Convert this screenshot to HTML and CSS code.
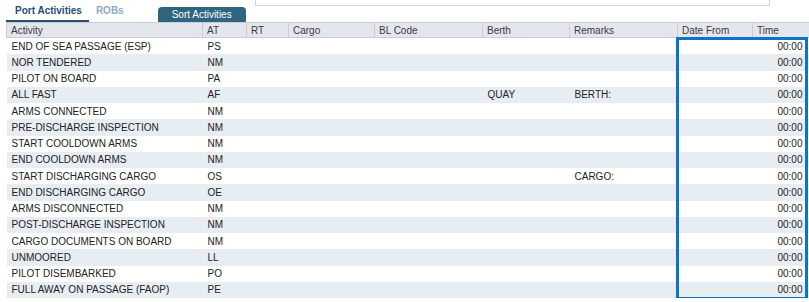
FILE: index.html
```html
<!DOCTYPE html>
<html lang="en">
<head>
  <meta charset="UTF-8">
  <title>Port Activities</title>
  <link rel="stylesheet" href="styles.css">
</head>
<body>

  <!-- Filter box (cut at top) -->
  <div class="filter-box"></div>

  <!-- Tabs and sort button -->
  <div class="tabs">
    <div class="tab active">Port Activities</div>
    <div class="tab">ROBs</div>
    <button class="sort-btn">Sort Activities</button>
  </div>

  <!-- Activities table -->
  <div class="grid-wrap">
    <table class="grid">
      <colgroup>
        <col style="width:196px">
        <col style="width:44px">
        <col style="width:42px">
        <col style="width:86px">
        <col style="width:108px">
        <col style="width:87px">
        <col style="width:108px">
        <col style="width:75px">
        <col style="width:57px">
      </colgroup>
      <thead>
        <tr>
          <th>Activity</th><th>AT</th><th>RT</th><th>Cargo</th><th>BL Code</th>
          <th>Berth</th><th>Remarks</th><th>Date From</th><th>Time</th>
        </tr>
      </thead>
      <tbody>
        <tr><td>END OF SEA PASSAGE (ESP)</td><td>PS</td><td></td><td></td><td></td><td></td><td></td><td></td><td class="time">00:00</td></tr>
        <tr><td>NOR TENDERED</td><td>NM</td><td></td><td></td><td></td><td></td><td></td><td></td><td class="time">00:00</td></tr>
        <tr><td>PILOT ON BOARD</td><td>PA</td><td></td><td></td><td></td><td></td><td></td><td></td><td class="time">00:00</td></tr>
        <tr><td>ALL FAST</td><td>AF</td><td></td><td></td><td></td><td>QUAY</td><td>BERTH:</td><td></td><td class="time">00:00</td></tr>
        <tr><td>ARMS CONNECTED</td><td>NM</td><td></td><td></td><td></td><td></td><td></td><td></td><td class="time">00:00</td></tr>
        <tr><td>PRE-DISCHARGE INSPECTION</td><td>NM</td><td></td><td></td><td></td><td></td><td></td><td></td><td class="time">00:00</td></tr>
        <tr><td>START COOLDOWN ARMS</td><td>NM</td><td></td><td></td><td></td><td></td><td></td><td></td><td class="time">00:00</td></tr>
        <tr><td>END COOLDOWN ARMS</td><td>NM</td><td></td><td></td><td></td><td></td><td></td><td></td><td class="time">00:00</td></tr>
        <tr><td>START DISCHARGING CARGO</td><td>OS</td><td></td><td></td><td></td><td></td><td>CARGO:</td><td></td><td class="time">00:00</td></tr>
        <tr><td>END DISCHARGING CARGO</td><td>OE</td><td></td><td></td><td></td><td></td><td></td><td></td><td class="time">00:00</td></tr>
        <tr><td>ARMS DISCONNECTED</td><td>NM</td><td></td><td></td><td></td><td></td><td></td><td></td><td class="time">00:00</td></tr>
        <tr><td>POST-DISCHARGE INSPECTION</td><td>NM</td><td></td><td></td><td></td><td></td><td></td><td></td><td class="time">00:00</td></tr>
        <tr><td>CARGO DOCUMENTS ON BOARD</td><td>NM</td><td></td><td></td><td></td><td></td><td></td><td></td><td class="time">00:00</td></tr>
        <tr><td>UNMOORED</td><td>LL</td><td></td><td></td><td></td><td></td><td></td><td></td><td class="time">00:00</td></tr>
        <tr><td>PILOT DISEMBARKED</td><td>PO</td><td></td><td></td><td></td><td></td><td></td><td></td><td class="time">00:00</td></tr>
        <tr><td>FULL AWAY ON PASSAGE (FAOP)</td><td>PE</td><td></td><td></td><td></td><td></td><td></td><td></td><td class="time">00:00</td></tr>
      </tbody>
    </table>

    <!-- Highlight over Date From / Time columns -->
    <div class="date-highlight"></div>
  </div>

</body>
</html>
```

FILE: styles.css
```css
body {
  margin: 0;
  padding-left: 6px;
  font-family: "Liberation Sans", Arial, sans-serif;
  background-color: #fff;
  color: #222;
  overflow: hidden;
}

.filter-box {
  margin-left: 249px;
  width: 513px;
  height: 5px;
  border: 1px solid #cfd3da;
  border-top: none;
}

.tabs {
  display: flex;
  align-items: flex-end;
  height: 16px;
}

.tab {
  font-size: 10px;
  font-weight: bold;
  color: #8fa9bf;
  padding: 0 7px 4px 7px;
  line-height: 11px;
  border-bottom: 2px solid transparent;
}

.tab.active {
  padding-left: 9px;
  color: #1f4f75;
  border-bottom-color: #2b4d6b;
}

.sort-btn {
  margin-left: 27px;
  width: 88px;
  height: 15px;
  padding: 0;
  border: none;
  border-radius: 4px 4px 0 0;
  background-color: #2f6580;
  color: #fff;
  font-family: inherit;
  font-size: 10px;
  line-height: 15px;
}

.grid-wrap {
  position: relative;
}

.grid {
  border-collapse: collapse;
  table-layout: fixed;
  width: 803px;
  font-size: 10px;
}

.grid th {
  height: 14px;
  padding: 0 4px;
  text-align: left;
  font-weight: normal;
  color: #3a3a3a;
  background-color: #e4e6ee;
  border: 1px solid #c9cdd5;
  white-space: nowrap;
  overflow: hidden;
}

.grid td {
  height: 16.25px;
  padding: 0 0 0 5px;
  border: none;
  white-space: nowrap;
  overflow: hidden;
}

.grid tbody tr:nth-child(even) {
  background-color: #e7edf1;
}

.grid td.time {
  text-align: right;
  padding-right: 7px;
}

.date-highlight {
  position: absolute;
  left: 670px;
  top: 15px;
  width: 126px;
  height: 257px;
  border: 3px solid #0b74c6;
  pointer-events: none;
}
```
